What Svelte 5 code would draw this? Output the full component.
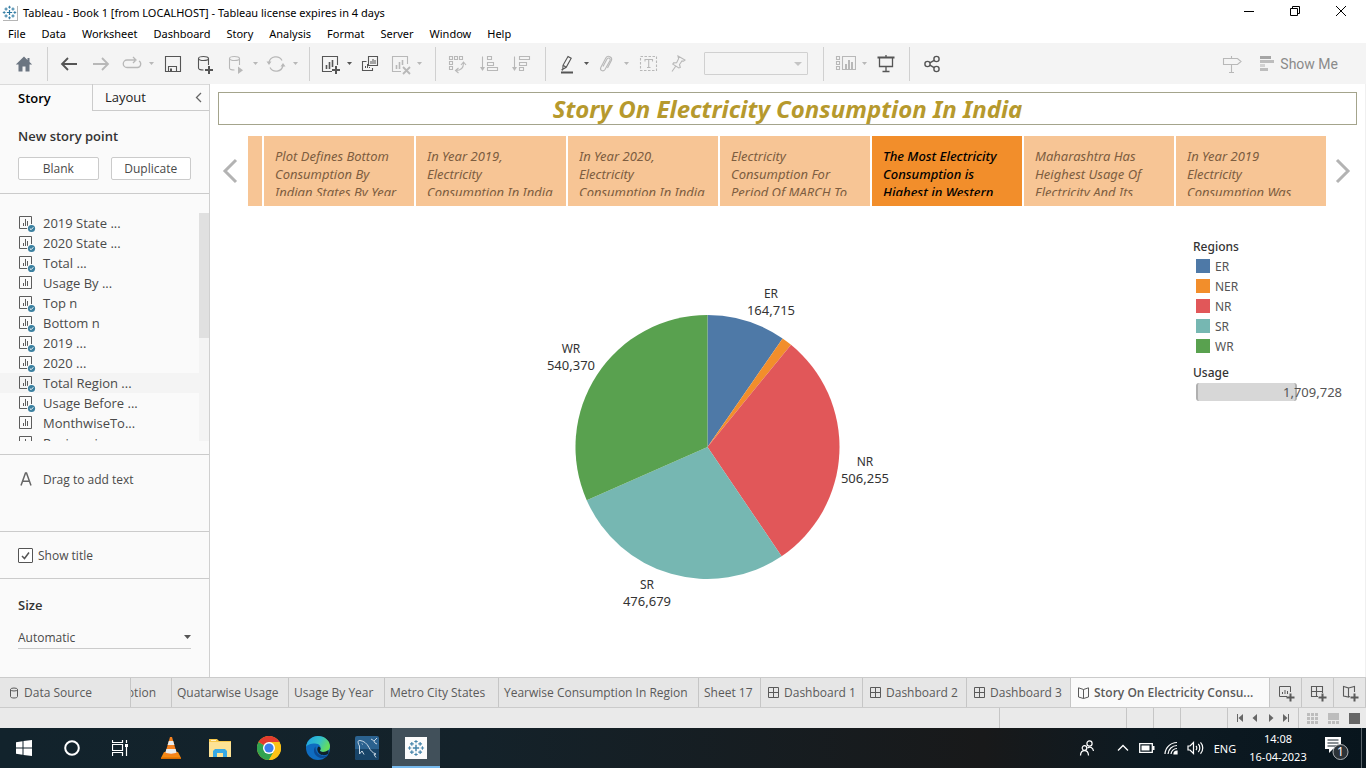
<script>
  const menus = ['File', 'Data', 'Worksheet', 'Dashboard', 'Story', 'Analysis', 'Format', 'Server', 'Window', 'Help'];

  const toolGroups = [
    { cls: 'g-home', tools: [{ icon: 'home', label: 'Start page' }] },
    {
      cls: 'g-data',
      tools: [
        { icon: 'back', label: 'Undo' },
        { icon: 'forward', label: 'Redo', off: true },
        { icon: 'replay', label: 'Replay', off: true, drop: true },
        { icon: 'save', label: 'Save' },
        { icon: 'dbadd', label: 'New data source' },
        { icon: 'dbplay', label: 'Pause updates', off: true, drop: true },
        { icon: 'refresh', label: 'Run update', off: true, drop: true }
      ]
    },
    {
      cls: 'g-sheet',
      tools: [
        { icon: 'newsheet', label: 'New worksheet', drop: true },
        { icon: 'dupsheet', label: 'Duplicate', narrow: true },
        { icon: 'clearsheet', label: 'Clear sheet', off: true, drop: true }
      ]
    },
    {
      cls: 'g-sort',
      tools: [
        { icon: 'swap', label: 'Swap rows and columns', off: true },
        { icon: 'sortasc', label: 'Sort ascending', off: true },
        { icon: 'sortdesc', label: 'Sort descending', off: true }
      ]
    },
    {
      cls: 'g-format',
      tools: [
        { icon: 'highlight', label: 'Highlight', drop: true },
        { icon: 'clip', label: 'Group members', off: true, drop: true },
        { icon: 'textlabel', label: 'Show mark labels', off: true },
        { icon: 'pin', label: 'Fix axes', off: true, narrow: true }
      ],
      fit: true
    },
    {
      cls: 'g-show',
      tools: [
        { icon: 'cards', label: 'Show or hide cards', off: true, drop: true },
        { icon: 'present', label: 'Presentation mode' }
      ]
    },
    { cls: 'g-share', tools: [{ icon: 'share', label: 'Share workbook' }] }
  ];

  const sheets = [
    { name: '2019 State ...', used: true },
    { name: '2020 State ...', used: true },
    { name: 'Total ...', used: true },
    { name: 'Usage By ...', used: false },
    { name: 'Top n', used: true },
    { name: 'Bottom n', used: true },
    { name: '2019 ...', used: true },
    { name: '2020 ...', used: true },
    { name: 'Total Region ...', used: true, hover: true },
    { name: 'Usage Before ...', used: true },
    { name: 'MonthwiseTo...', used: false },
    { name: 'Regionwise ...', used: false }
  ];

  const points = [
    'Plot Defines Bottom Consumption By Indian States By Year',
    'In Year 2019, Electricity Consumption In India',
    'In Year 2020, Electricity Consumption In India',
    'Electricity Consumption For Period Of MARCH To',
    'The Most Electricity Consumption is Highest in Western',
    'Maharashtra Has Heighest Usage Of Electricity And Its',
    'In Year 2019 Electricity Consumption Was'
  ];
  let active = $state(4);

  const regions = [
    { name: 'ER', value: 164715, color: '#4e79a7', x: 241, y: 14 },
    { name: 'NER', value: 21709, color: '#f28e2b' },
    { name: 'NR', value: 506255, color: '#e15759', x: 335, y: 182 },
    { name: 'SR', value: 476679, color: '#76b7b2', x: 117, y: 305 },
    { name: 'WR', value: 540370, color: '#59a14f', x: 41, y: 69 }
  ];
  const total = regions.reduce((sum, r) => sum + r.value, 0);
  const cx = 177.5;
  const cy = 167;
  const radius = 132;

  function buildSlices() {
    let start = 0;
    return regions.map((r) => {
      const end = start + (r.value / total) * Math.PI * 2;
      const p = (a) => `${cx + radius * Math.sin(a)} ${cy - radius * Math.cos(a)}`;
      const d = `M${cx} ${cy}L${p(start)}A${radius} ${radius} 0 0 1 ${p(end)}Z`;
      start = end;
      return { ...r, d };
    });
  }
  const slices = buildSlices();
  const fmt = (n) => n.toLocaleString('en-US');

  const tabs = [
    { name: 'Quatarwise Usage' },
    { name: 'Usage By Year' },
    { name: 'Metro City States' },
    { name: 'Yearwise Consumption In Region' },
    { name: 'Sheet 17' },
    { name: 'Dashboard 1', icon: 'grid' },
    { name: 'Dashboard 2', icon: 'grid' },
    { name: 'Dashboard 3', icon: 'grid' },
    { name: 'Story On Electricity Consu...', icon: 'book', on: true }
  ];

  const apps = ['vlc', 'folder', 'chrome', 'edge', 'mysql', 'tableau'];
  let showTitle = $state(true);
</script>

{#snippet caret()}
  <svg class="caret" width="5" height="3" viewBox="0 0 5 3" aria-hidden="true"><path d="M0 0h5L2.5 3z" fill="currentColor" /></svg>
{/snippet}

{#snippet tableauMark()}
  <g fill="none" stroke="currentColor">
    <path d="M8 5.200v5.600M5.200 8h5.600" stroke-width="1.300" />
    <path d="M8 .8v3M6.500 2.300h3M8 12.200v3M6.500 13.700h3M.8 8h3M2.300 6.500v3M12.200 8h3M13.700 6.500v3" stroke-width=".9" />
    <path d="M4.300 2.600v3.400M2.600 4.300h3.400M11.700 2.600v3.400M10 4.300h3.400M4.300 10v3.400M2.600 11.700h3.400M11.700 10v3.400M10 11.700h3.400" stroke-width="1" />
  </g>
{/snippet}

{#snippet toolIcon(name)}
  <svg class="tool-icon" width="22" height="22" viewBox="0 0 22 22" fill="none" stroke="currentColor" stroke-width="1.1" aria-hidden="true">
    {#if name === 'home'}
      <path d="M11 3.500L2.800 11.500h2.700v7h4v-5h3v5h4v-7h2.700l-2.700-2.600V5h-2v2z" fill="#6b7581" stroke="none" />
    {:else if name === 'back'}
      <path d="M19 11H4M10 5l-6 6 6 6" stroke-width="1.800" />
    {:else if name === 'forward'}
      <path d="M3 11h15M12 5l6 6-6 6" stroke-width="1.800" />
    {:else if name === 'replay'}
      <path d="M14 7H6a3.500 3.500 0 0 0 0 7.500h10.500a3.500 3.500 0 0 0 1.500-6.500M12 4l3 3-3 3" stroke-width="1.300" />
    {:else if name === 'save'}
      <path d="M3.500 3.500h15v15h-15zM6.500 18v-4.500h8V18" /><path d="M8 15.500h2V19H8z" fill="currentColor" stroke="none" />
    {:else if name === 'dbadd'}
      <ellipse cx="9.500" cy="5.500" rx="5" ry="2" /><path d="M4.500 5.500v9.500c0 1 2 2 5 2M14.500 5.500V12" />
      <path d="M15 13v8M11 17h8" stroke-width="2" />
    {:else if name === 'dbplay'}
      <ellipse cx="9.500" cy="5.500" rx="5" ry="2" /><path d="M4.500 5.500v9.500c0 1 2 2 5 2M14.500 5.500V12" />
      <path d="M13 13.500l5 3.800-5 3.800z" fill="currentColor" stroke="none" />
    {:else if name === 'refresh'}
      <path d="M4 9.500a7 7 0 0 1 13-2M18 12.500a7 7 0 0 1-13 2" stroke-width="1.300" /><path d="M1.500 8.500h5L4 12zM15.500 13.500h5L18 10z" fill="currentColor" stroke="none" />
    {:else if name === 'newsheet'}
      <path d="M13 18.500H3.500v-15h15V12" /><path d="M7.500 12v4M10.500 9v7M13.500 7v7" stroke-width="1.600" /><path d="M17 13v8M13 17h8" stroke-width="2" />
    {:else if name === 'dupsheet'}
      <path d="M9.500 3.500h9v9h-9zM7.500 8.500h-4v9h10V15" /><path d="M12 8v3M14 6v5M16 7v4M6.500 13v2M8.500 11v4M10.500 14v1" stroke-width="1" />
    {:else if name === 'clearsheet'}
      <path d="M12 18.500H3.500v-15h15V11" /><path d="M7.500 12v4M10.500 9v7M13.500 7v5" stroke-width="1.600" /><path d="M14 14l7 7M21 14l-7 7" stroke-width="1.800" />
    {:else if name === 'swap'}
      <path d="M3.500 3.500h3v3h-3zM8.500 3.500h3v3h-3zM13.500 3.500h3v3h-3zM3.500 8.500h3v3h-3zM3.500 13.500h3v3h-3z" />
      <path d="M17.500 10c0 5-3 7.500-7.500 7.500M15 12l2.500-3 2.500 3M12.500 15l-3 2.500 3 2.500" />
    {:else if name === 'sortasc'}
      <path d="M4.500 3.500V16" /><path d="M2 14h5l-2.500 4z" fill="currentColor" stroke="none" /><path d="M9.500 3.500h4v3h-4zM9.500 9.500h6v3h-6zM9.500 14.500h10v3h-10z" />
    {:else if name === 'sortdesc'}
      <path d="M4.500 3.500V16" /><path d="M2 14h5l-2.500 4z" fill="currentColor" stroke="none" /><path d="M9.500 3.500h10v3h-10zM9.500 9.500h7v3h-7zM9.500 14.500h4v3h-4z" />
    {:else if name === 'highlight'}
      <path d="M12 3.500l3.200 1.800-5 9-3.400 2 .2-4zM7 12.300l3.200 2M5.500 16.500l1.500.8" /><path d="M5 19.500h12" stroke-width="2" />
    {:else if name === 'clip'}
      <path d="M7 13.500l4-7.500c1.200-2 4-.6 3 1.500l-5 9c-1.700 2.600-5.500 1-4.200-2l5-9.500c2-3.400 7-1 5.600 2.600L11.500 15" />
    {:else if name === 'textlabel'}
      <path d="M3.500 3.500h16v14h-16z" stroke-dasharray="2.500 1.500" /><path d="M8 8.500V6.500h7.500v2M11.700 6.500v8M10 14.500h3.500" />
    {:else if name === 'pin'}
      <path d="M10 3l7 4-1.500 1.200-1.500-.3-2.500 3.600.8 3-1.500.5-6-3.800.8-1.300 3-.2 2-4zM7.500 13.500L4 18.500" />
    {:else if name === 'cards'}
      <path d="M2.500 3.500h3v3h-3zM2.500 8.500h3v3h-3zM2.500 13.500h3v3h-3zM8.500 3.500h13v13h-13z" /><path d="M12 11v5M15 7v9M18 9v7" stroke-width="2" />
    {:else if name === 'present'}
      <path d="M2.500 4.500h17" stroke-width="2" /><path d="M4.500 5v8.500h13V5M11 13.500v4.500M7.500 18.500h7M11 2v2" stroke-width="1.300" />
    {:else if name === 'share'}
      <circle cx="6.500" cy="11" r="2.600" stroke-width="1.400" /><circle cx="15.500" cy="6" r="2.600" stroke-width="1.400" /><circle cx="15.500" cy="16" r="2.600" stroke-width="1.400" /><path d="M8.800 9.800l4.400-2.500M8.800 12.200l4.400 2.500" stroke-width="1.500" />
    {:else if name === 'sign'}
      <path d="M2.500 5.500h14l3.500 3-3.500 3h-14zM10.500 3v2.500M10.500 11.500v8M8 19.500h5" />
    {/if}
  </svg>
{/snippet}

{#snippet sheetIcon(used)}
  <svg width="18" height="20" viewBox="0 -2 18 20" fill="none" stroke="#5c5c5c" aria-hidden="true">
    <path d="M1.500 1.500h12v12h-12z" />
    <path d="M5.500 8v3M7.500 4v7M9.500 6v5" />
    {#if used}
      <circle cx="13.500" cy="13.500" r="4.500" fill="#fafafa" stroke="none" />
      <circle cx="13.500" cy="13.500" r="3.600" fill="#3a7f9f" stroke="none" />
      <path d="M11.800 13.500l1.300 1.200 2.200-2.400" stroke="#fff" />
    {/if}
  </svg>
{/snippet}

{#snippet tabIcon(name)}
  <svg width="18" height="18" viewBox="0 0 18 18" fill="none" stroke="#5a5a5a" stroke-width="1.100" aria-hidden="true">
    {#if name === 'sheet+'}
      <path d="M10 12.500H2.500v-10h11V8M5.500 8v2M8 6v4M10.500 7v3" stroke-width="1" /><path d="M13.500 9.500v8M9.500 13.500h8" stroke-width="2" />
    {:else if name === 'grid+'}
      <path d="M9 12.500H2.500v-10h11V9M2.500 7.500h11M7.500 2.500v10" /><path d="M13.500 9.500v8M9.500 13.500h8" stroke-width="2" />
    {:else}
      <path d="M7.500 4v9L2.500 12V2.500zM7.500 4l6-1.500V8M7.500 13l1.500-.5" /><path d="M13.500 9.500v8M9.500 13.500h8" stroke-width="2" />
    {/if}
  </svg>
{/snippet}

<div class="window">
  <header class="titlebar">
    <svg class="logo" width="15" height="15" viewBox="0 0 16 16" aria-hidden="true">{@render tableauMark()}</svg>
    <span class="caption">Tableau - Book 1 [from LOCALHOST] - Tableau license expires in 4 days</span>
    <div class="winbtns">
      <button aria-label="Minimize"><svg width="12" height="12" viewBox="0 0 12 12"><path d="M1 6.500h10" stroke="#000" /></svg></button>
      <button aria-label="Restore"><svg width="12" height="12" viewBox="0 0 12 12" fill="none" stroke="#000"><path d="M1.500 3.500h7v7h-7zM3.500 3.500v-2h7v7h-2" /></svg></button>
      <button aria-label="Close"><svg width="12" height="12" viewBox="0 0 12 12"><path d="M1 1l10 10M11 1L1 11" stroke="#000" /></svg></button>
    </div>
  </header>

  <nav class="menubar">
    {#each menus as m}<button>{m}</button>{/each}
  </nav>

  <div class="toolbar">
    {#each toolGroups as g}
      <div class="group {g.cls}">
        {#each g.tools as t}
          <button class="tool" class:off={t.off} class:drop={t.drop} class:narrow={t.narrow} aria-label={t.label}>
            {@render toolIcon(t.icon)}
            {#if t.drop}{@render caret()}{/if}
          </button>
        {/each}
        {#if g.fit}
          <div class="fit">
            <select aria-label="Fit" disabled><option></option></select>
            <svg width="8" height="4" viewBox="0 0 8 4"><path d="M0 0h8L4 4z" fill="#c4c4c4" /></svg>
          </div>
        {/if}
      </div>
    {/each}
    <div class="showme">
      <button class="tool off" aria-label="Data guide">{@render toolIcon('sign')}</button>
      <button class="showme-btn">
        <svg width="14" height="15" viewBox="0 0 14 15" aria-hidden="true"><path d="M0 0h11v3H0z" fill="#a5a5a5" /><path d="M0 4h14v3H0zM0 12h8v3H0z" fill="#bdbdbd" /><path d="M0 8h5v3H0z" fill="#d2d2d2" /></svg>
        Show Me
      </button>
    </div>
  </div>

  <main class="body">
    <aside class="side">
      <div class="side-tabs">
        <button class="side-tab on">Story</button>
        <button class="side-tab">Layout
          <svg width="7" height="11" viewBox="0 0 7 11" fill="none" stroke="#666" stroke-width="1.300" aria-hidden="true"><path d="M6 1L1.500 5.500 6 10" /></svg>
        </button>
      </div>
      <section class="new">
        <h2>New story point</h2>
        <div class="pair"><button>Blank</button><button>Duplicate</button></div>
      </section>
      <section class="sheets">
        <ul>
          {#each sheets as s}
            <li class:hover={s.hover}>{@render sheetIcon(s.used)}<span>{s.name}</span></li>
          {/each}
        </ul>
        <div class="track"><div class="thumb"></div></div>
      </section>
      <section class="drag">
        <svg width="12" height="14" viewBox="0 0 12 14" fill="none" stroke="#666" stroke-width="1.500" aria-hidden="true"><path d="M1 13.500L5.500 1h1L11 13.500M2.800 9.200h6.400" /></svg>
        <span>Drag to add text</span>
      </section>
      <section class="check">
        <label><input type="checkbox" bind:checked={showTitle} />Show title</label>
      </section>
      <section class="size">
        <h2>Size</h2>
        <div class="select">
          <select aria-label="Size"><option>Automatic</option></select>
          <svg width="7" height="4" viewBox="0 0 7 4" aria-hidden="true"><path d="M0 0h7L3.500 4z" fill="#555" /></svg>
        </div>
      </section>
    </aside>

    <section class="story">
      <h1>Story On Electricity Consumption In India</h1>
      <div class="nav">
        <button class="arrow" aria-label="Previous"><svg width="16" height="26" viewBox="0 0 16 26" fill="none" stroke="#b3b3b3" stroke-width="3"><path d="M14 2L3 13l11 11" /></svg></button>
        <div class="points">
          <div class="sliver"></div>
          {#each points as p, i}
            <button class="point" class:on={i === active} onclick={() => (active = i)}><span>{p}</span></button>
          {/each}
        </div>
        <button class="arrow" aria-label="Next"><svg width="16" height="26" viewBox="0 0 16 26" fill="none" stroke="#b3b3b3" stroke-width="3"><path d="M2 2l11 11L2 24" /></svg></button>
      </div>
      <div class="view">
        <div class="chart">
          <svg width="380" height="340" viewBox="0 0 380 340" role="img" aria-label="Usage by region">
            {#each slices as s}
              <path d={s.d} fill={s.color} />
            {/each}
            {#each slices.filter((s) => s.x) as s}
              <text x={s.x} y={s.y} dy="4">{s.name}</text>
              <text class="num" x={s.x} y={s.y + 17} dy="4">{fmt(s.value)}</text>
            {/each}
          </svg>
        </div>
        <div class="legend">
          <h3>Regions</h3>
          <ul>
            {#each regions as r}
              <li><i style="background:{r.color}"></i>{r.name}</li>
            {/each}
          </ul>
          <h3>Usage</h3>
          <div class="usage"><span>{fmt(1709728)}</span></div>
        </div>
      </div>
    </section>
  </main>

  <nav class="tabs">
    <button class="tab source">
      <svg width="11" height="12" viewBox="0 0 11 12" fill="none" stroke="#5a5a5a" aria-hidden="true"><ellipse cx="5" cy="2.500" rx="3.500" ry="1.500" /><path d="M1.500 2.500v7c0 2 7 2 7 0v-7" /></svg>
      Data Source
    </button>
    <button class="tab cut"><span>ption</span></button>
    {#each tabs as t}
      <button class="tab" class:on={t.on} class:has-icon={t.icon}>
        {#if t.icon === 'grid'}
          <svg width="11" height="12" viewBox="0 0 11 12" fill="none" stroke="#5a5a5a" aria-hidden="true"><path d="M.5.5h10v10H.5zM5.500.5v10M.5 5.500h10" /></svg>
        {:else if t.icon === 'book'}
          <svg width="11" height="12" viewBox="0 0 11 12" fill="none" stroke="#5a5a5a" aria-hidden="true"><path d="M5.500 2.500v9L.5 10V.8zM5.500 2.500L10.500.8V10l-5 1.500" /></svg>
        {/if}
        {t.name}
      </button>
    {/each}
    <button class="tab add" aria-label="New worksheet tab">{@render tabIcon('sheet+')}</button>
    <button class="tab add" aria-label="New dashboard tab">{@render tabIcon('grid+')}</button>
    <button class="tab add" aria-label="New story tab">{@render tabIcon('book+')}</button>
  </nav>

  <div class="status">
    <div></div><div></div><div></div><div></div><div></div>
    <div class="pager">
      <button aria-label="First"><svg width="8" height="8" viewBox="0 0 8 8" fill="#666"><path d="M1 0h1v8H1zM7 0v8L2.500 4z" /></svg></button>
      <button aria-label="Previous tab"><svg width="8" height="8" viewBox="0 0 8 8" fill="#666"><path d="M6 0v8L1.500 4z" /></svg></button>
      <button aria-label="Next tab"><svg width="8" height="8" viewBox="0 0 8 8" fill="#666"><path d="M2 0v8l4.500-4z" /></svg></button>
      <button aria-label="Last"><svg width="8" height="8" viewBox="0 0 8 8" fill="#666"><path d="M6 0h1v8H6zM1 0v8l4.500-4z" /></svg></button>
    </div>
    <div class="modes">
      <button aria-label="Sheet sorter"><svg width="11" height="11" viewBox="0 0 11 11" fill="#bdbdbd"><path d="M0 0h3v3H0zM4 0h3v3H4zM8 0h3v3H8zM0 4h3v3H0zM4 4h3v3H4zM8 4h3v3H8zM0 8h3v3H0zM4 8h3v3H4zM8 8h3v3H8z" /></svg></button>
      <button aria-label="Filmstrip"><svg width="11" height="11" viewBox="0 0 11 11" fill="#bdbdbd"><path d="M0 0h11v7H0zM0 8h3v3H0zM4 8h3v3H4zM8 8h3v3H8z" /></svg></button>
      <button aria-label="Tabs"><svg width="11" height="11" viewBox="0 0 11 11" fill="#666"><path d="M0 0h11v11H0z" /></svg></button>
    </div>
  </div>

  <footer class="taskbar">
    <div class="sys">
      <button aria-label="Start"><svg width="16" height="16" viewBox="0 0 16 16" fill="#fff"><path d="M0 2.200l6.500-1v6.300H0zM7.500 1L16 0v7.500H7.500zM0 8.500h6.500v6.300l-6.500-1zM7.500 8.500H16V16l-8.500-1.100z" /></svg></button>
      <button aria-label="Search"><svg width="16" height="16" viewBox="0 0 16 16" fill="none" stroke="#fff" stroke-width="2"><circle cx="8" cy="8" r="6.800" /></svg></button>
      <button aria-label="Task view"><svg width="16" height="16" viewBox="0 0 16 16" fill="none" stroke="#fff"><path d="M.5 0v2.500h10V0M.5 4.500h10v6H.5zM.5 16v-3.500h10V16M14.500 0v3M14.500 7v9" stroke-width="1.200" /><path d="M13 4h3v3h-3z" fill="#fff" stroke="none" /></svg></button>
    </div>
    <div class="apps">
      {#each apps as a}
        <button class:running={a === 'tableau'} aria-label={a}>
          <svg width="24" height="24" viewBox="0 0 24 24">
            {#if a === 'vlc'}
              <path d="M5 16h14l3 6H2z" fill="#f58a12" /><path d="M2 21.500h20v1.500H2z" fill="#d96c00" />
              <path d="M11 1h2l5 17c-2 2-10 2-12 0z" fill="#f58220" />
              <path d="M9.800 5h4.400l1.200 4H8.600zM7.400 13h9.200l1 3.500c-2 1.500-9 1.500-11.200 0z" fill="#e9edef" />
            {:else if a === 'folder'}
              <path d="M1 3h8l2 2h12v16H1z" fill="#f7c84b" /><path d="M1 6h22v15H1z" fill="#fde294" /><path d="M3 4h5v1H3z" fill="#fff3c8" />
              <path d="M5 21v-6l2-2h10l2 2v6h-4v-4H9v4z" fill="#37a9e5" />
            {:else if a === 'chrome'}
              <circle cx="12" cy="12" r="12" fill="#fbc116" />
              <path d="M12 12L1.600 6A12 12 0 0 0 12 24l5.200-9z" fill="#31a350" />
              <path d="M12 12L1.600 6A12 12 0 0 1 22.400 6H12z" fill="#e33b2e" /><path d="M12 6h10.400A12 12 0 0 1 12 24l5.200-9z" fill="#fbc116" />
              <circle cx="12" cy="12" r="6" fill="#fff" /><circle cx="12" cy="12" r="4.600" fill="#3b7ded" />
            {:else if a === 'edge'}
              <defs>
                <linearGradient id="edgeTop" x1="0" x2="1" y1="0" y2=".4"><stop offset="0" stop-color="#1ca1e8" /><stop offset=".6" stop-color="#35c1c8" /><stop offset="1" stop-color="#64dd5e" /></linearGradient>
              </defs>
              <circle cx="12" cy="12" r="12" fill="#0f6cc0" />
              <path d="M0 11C1 4 6 0 12 0c7 0 12 5 12 10 0 4-3 6-6.500 6-3 0-4-1-3.500-2 2-3-.5-6.500-5-6.500C4.500 7.500 1 9 0 11z" fill="url(#edgeTop)" />
              <path d="M9.500 10.500c-3 3-1.500 9 3.500 11 3.500 1.300 7 .3 9-2.500C16 22 9 18 9.500 10.500z" fill="#0c4a92" />
              <path d="M22.500 17.500c-3 3-10 2-11-3-.5-1.500 0-3 1-4 2.500 1 2.500 2.500 1.500 4 0 2 5.500 2 8.500-.500z" fill="#10212a" />
            {:else if a === 'mysql'}
              <rect width="24" height="24" rx="2" fill="#2b628f" /><path d="M0 13h24v9a2 2 0 0 1-2 2H2a2 2 0 0 1-2-2z" fill="#184468" />
              <path d="M4.500 18V10C2.500 7 2.500 4 5 4.500c4 .5 7 3 9 7 1.500 3 3 5 7 6.500l-2 .5 2 3M4.500 18l2.500-3 2 3.500M7 7.500l.5 1M16 3l2.500 1.500L20 7l2 1M22 2l-3 3" fill="none" stroke="#c9d8e4" />
            {:else}
              <path d="M1 1h22v22H1z" fill="#fcfcfc" /><g transform="translate(3 3) scale(1.125)" color="#4584aa">{@render tableauMark()}</g>
            {/if}
          </svg>
        </button>
      {/each}
    </div>
    <div class="tray">
      <button class="people" aria-label="People"><svg width="16" height="16" viewBox="0 0 16 16" fill="none" stroke="#fff" stroke-width="1.200"><circle cx="10.500" cy="3.500" r="2.600" /><path d="M8.500 8c2.500-2 5.500-.5 6 3" /><circle cx="5.500" cy="8" r="2.300" /><path d="M1.500 15.500c.3-6.500 7.700-6.500 8 0" /></svg></button>
      <button aria-label="Hidden icons"><svg width="12" height="8" viewBox="0 0 12 8" fill="none" stroke="#fff" stroke-width="1.300"><path d="M1 6.500l5-5 5 5" /></svg></button>
      <button aria-label="Battery"><svg width="16" height="10" viewBox="0 0 16 10"><path d="M.7.7h12.600v8.600H.7z" fill="none" stroke="#fff" stroke-width="1.300" /><path d="M2.500 2.500h8v5h-8zM14 3h1.500v4H14z" fill="#fff" /></svg></button>
      <button aria-label="Network"><svg width="14" height="14" viewBox="0 0 14 14" fill="none" stroke="#fff" stroke-width="1.200"><path d="M1 13A12 12 0 0 1 13 1.500M4 13a9 9 0 0 1 9-8.500M7 13a6 6 0 0 1 6-5.500" /><path d="M10 13a3 3 0 0 1 3-3v3z" fill="#fff" /></svg></button>
      <button aria-label="Volume"><svg width="17" height="14" viewBox="0 0 17 14" fill="none" stroke="#fff" stroke-width="1.200"><path d="M1 5h2l3.500-3.500v11L3 9H1zM9 5c1 1 1 3 0 4M11.300 3c2 2 2 6 0 8M13.500 1.300c3 3 3 8.500 0 11.400" /></svg></button>
      <button class="lang">ENG</button>
      <button class="clock"><span>14:08</span><span>16-04-2023</span></button>
      <button class="note" aria-label="Notifications"><svg width="26" height="26" viewBox="0 0 26 26"><path d="M1 2h16v12H9l-4 4v-4H1z" fill="#fff" /><path d="M3.500 5h11M3.500 8h11M3.500 11h11" stroke="#13212a" /><circle cx="16.500" cy="17" r="7.500" fill="#2c3338" stroke="#aeb3b6" /><text x="16.500" y="21" text-anchor="middle" fill="#fff">1</text></svg></button>
      <button class="peek" aria-label="Show desktop"></button>
    </div>
  </footer>
</div>

<style>
  :global(body) { margin: 0; background: #fff; }
  :global(#app) { font-family: "Open Sans", sans-serif; }
  .window { display: flex; flex-direction: column; min-height: 100vh; font-size: 12px; color: #4a4a4a; background: #fff; overflow: hidden; }
  button, select, input { font: inherit; color: inherit; margin: 0; }
  button { display: flex; align-items: center; justify-content: center; padding: 0; border: 0; background: none; white-space: nowrap; }
  h1, h2, h3, ul { margin: 0; padding: 0; list-style: none; }

  .titlebar { display: flex; align-items: center; height: 24px; padding-left: 2px; gap: 6px; color: #000; font-family: "Noto Sans", sans-serif; font-size: 11px; }
  .logo { color: #27759f; box-shadow: 1px 1px 0 #b5b5b5; }
  .caption { flex: 1; }
  .winbtns { display: flex; align-self: stretch; margin-right: 2px; }
  .winbtns button { width: 46px; height: 21px; }

  .menubar { display: flex; height: 19px; gap: 16px; padding-left: 8px; color: #000; font-family: "Noto Sans", sans-serif; font-size: 11px; }
  .menubar button { height: 19px; }

  .toolbar { display: flex; height: 41px; background: #f4f4f4; }
  .group { display: flex; align-items: center; box-sizing: border-box; padding-left: 6px; color: #555; background: linear-gradient(#d0d0d0, #d0d0d0) right center / 1px 34px no-repeat; }
  .g-home { width: 48px; padding-left: 8px; }
  .g-data { width: 262px; padding-left: 5px; }
  .g-sheet { width: 126px; padding-left: 5px; }
  .g-sort { width: 110px; padding-left: 5px; }
  .g-format { width: 278px; }
  .g-show { width: 86px; }
  .g-share { background: none; }
  .tool { width: 32px; height: 32px; }
  .tool.narrow { width: 30px; }
  .tool.drop { width: 40px; gap: 6px; }
  .tool-icon { flex: none; }
  .tool.off { color: #b8b8b8; }
  .fit { display: flex; align-items: center; justify-content: flex-end; width: 102px; height: 21px; margin-left: 10px; border: 1px solid #d0d0d0; border-radius: 1px; }
  .fit select { flex: 1; min-width: 0; border: 0; background: none; appearance: none; }
  .fit svg { margin-right: 5px; }
  .showme { display: flex; align-items: center; margin-left: auto; margin-right: 28px; gap: 12px; }
  .showme-btn { gap: 6px; font-family: Roboto, sans-serif; font-size: 14px; color: #8a8a8a; }

  .body { display: flex; flex: 1; }
  .side { display: flex; flex-direction: column; flex: none; width: 209px; background: #fafafa; border-right: 1px solid #d0d0d0; font-size: 13px; }
  .side section { border-bottom: 1px solid #cbcbcb; }
  .side-tabs { display: flex; height: 27px; color: #222; box-shadow: inset 0 1px #dadada; }
  .side-tab { flex: 1; justify-content: space-between; padding: 0 7px 0 12px; border-left: 1px solid #cbcbcb; border-bottom: 1px solid #cbcbcb; }
  .side-tab.on { flex: none; width: 92px; padding-left: 18px; border: 0; font-weight: 600; color: #000; }
  .side h2 { font-size: 13px; font-weight: 600; line-height: 18px; color: #333; }
  .new { display: flex; flex-direction: column; gap: 12px; height: 66px; padding: 16px 18px 0; }
  .pair { display: flex; gap: 12px; }
  .pair button { flex: 1; height: 23px; border: 1px solid #cbcbcb; border-radius: 2px; background: #fff; font-size: 12px; }
  .sheets { display: flex; height: 228px; padding: 19px 0 13px; }
  .sheets ul { flex: 1; overflow: hidden; }
  .sheets li { display: flex; align-items: center; gap: 7px; height: 20px; padding-left: 18px; font-size: 13px; }
  .sheets li.hover { background: #f4f4f4; }
  .sheets li svg { flex: none; }
  .track { width: 10px; background: #f4f4f4; }
  .thumb { height: 125px; background: #e0e0e0; }
  .drag { display: flex; height: 59px; padding: 17px 20px 0; gap: 11px; font-size: 12px; line-height: 16px; }
  .check { display: flex; align-items: center; height: 46px; padding-left: 18px; font-size: 12px; line-height: 15px; }
  .check label { display: flex; align-items: center; gap: 5px; }
  .check input { width: 15px; height: 15px; box-sizing: border-box; appearance: none; border: 1px solid #555; border-radius: 1px; background: #fff; }
  .check input:checked { background: #fff url("data:image/svg+xml,%3Csvg xmlns='http://www.w3.org/2000/svg' viewBox='0 0 13 13'%3E%3Cpath d='M3 7l2.500 2.500L10 3.500' fill='none' stroke='%23555' stroke-width='1.500'/%3E%3C/svg%3E"); }
  .side .size { flex: 1; border: 0; padding: 17px 18px 0; }
  .select { display: flex; align-items: center; height: 22px; margin-top: 12px; border-bottom: 1px solid #cbcbcb; }
  .select select { flex: 1; border: 0; background: none; appearance: none; padding: 0; font-size: 12px; outline: 0; }

  .story { display: flex; flex-direction: column; flex: 1; min-width: 0; padding: 8px 8px 0; border-right: 1px solid #f0f0f0; }
  h1 { height: 31px; line-height: 31px; border: 1px solid #a4a48c; text-align: center; font-size: 24px; font-weight: 700; font-style: italic; font-family: "Noto Sans", sans-serif; color: #b6992d; white-space: nowrap; overflow: hidden; }
  .nav { display: flex; height: 70px; margin-top: 11px; }
  .arrow { width: 30px; flex: none; box-sizing: border-box; }
  .arrow:first-child { justify-content: flex-start; padding-left: 4px; }
  .arrow:last-child { width: 31px; padding-left: 3px; }
  .points { display: flex; flex: 1; gap: 2px; min-width: 0; }
  .sliver { flex: none; width: 14px; background: #f7c595; }
  .point { flex: 1 1 0; min-width: 0; align-items: flex-start; padding: 11px 11px 10px; background: #f7c595; color: #7d5d40; font-family: "Noto Sans", sans-serif; font-size: 13px; font-style: italic; line-height: 18px; text-align: left; white-space: normal; }
  .point span { height: 49px; width: 100%; overflow: hidden; }
  .point.on { background: #f28e2b; color: #000; font-weight: 500; }
  .view { display: flex; flex: 1; }
  .chart { display: flex; flex: 1; justify-content: center; align-items: center; padding: 16px 0 0 28px; }
  .chart text { font-family: "Noto Sans", sans-serif; font-size: 12px; fill: #333; text-anchor: middle; }
  .chart .num { font-size: 13px; }
  .legend { width: 164px; padding-top: 32px; font-family: "Noto Sans", sans-serif; color: #555; }
  .legend h3 { font-size: 12px; font-weight: 500; line-height: 18px; color: #333; }
  .legend ul { padding: 0 0 8px 3px; }
  .legend li { display: flex; align-items: center; gap: 5px; height: 20px; }
  .legend i { width: 14px; height: 14px; }
  .usage { position: relative; width: 97px; height: 18px; margin: 1px 0 0 3px; background: #d7d7d7; border: solid #b0b0b0; border-width: 0 2px; border-radius: 3px; font-size: 13px; line-height: 18px; }
  .usage span { position: absolute; left: 85px; top: 0; }

  .tabs { display: grid; grid-template-columns: 131px 41px 117px 96px 114px 200px 62px 102px 104px 104px 1fr 32px 32px 32px; height: 31px; box-sizing: border-box; border-top: 1px solid #cbcbcb; border-bottom: 1px solid #cbcbcb; background: #e6e6e6; color: #5a5a5a; }
  .tab { justify-content: flex-start; min-width: 0; overflow: hidden; padding-left: 5px; gap: 5px; border-right: 1px solid #c6c6c6; }
  .tab svg { flex: none; }
  .tab.has-icon { padding-left: 7px; }
  .source { padding-left: 9px; gap: 4px; }
  .cut { justify-content: flex-end; padding: 0 15px 0 0; }
  .tab.on { background: #fafafa; font-weight: 600; }
  .tab.add { justify-content: center; padding: 0; }

  .status { display: flex; height: 20px; background: #eaeaea; }
  .status > div { width: 26px; border-right: 1px solid #c6c6c6; }
  .status > div:nth-child(1) { flex: 1; }
  .status > div:nth-child(2) { width: 126px; }
  .status > div:nth-child(5) { width: 46px; }
  .status > .pager { display: flex; align-items: center; justify-content: space-evenly; width: 70px; }
  .status > .modes { display: flex; align-items: center; justify-content: space-between; width: 53px; padding: 0 6px 0 8px; border: 0; }

  .taskbar { display: flex; height: 40px; background: linear-gradient(90deg, #12232c, #14222a 35%, #18191a 72%, #0d1a22 84%, #08151d); color: #fff; font-family: "Noto Sans", sans-serif; }
  .sys, .apps { display: flex; }
  .sys button, .apps button { width: 48px; height: 40px; }
  .apps { gap: 1px; margin-left: 3px; }
  .apps .running { background: #41505a; box-shadow: inset 0 -2px #76b9ed; }
  .tray { display: flex; margin-left: auto; }
  .tray button { width: 24px; }
  .tray .people { width: 44px; padding-right: 4px; }
  .tray .lang { width: 36px; font-size: 11px; }
  .tray .clock { width: 70px; flex-direction: column; font-size: 11px; line-height: 18px; }
  .tray .note { width: 48px; }
  .note text { font-size: 12px; }
  .tray .peek { width: 5px; box-sizing: border-box; border-left: 1px solid #5a646a; }
</style>
